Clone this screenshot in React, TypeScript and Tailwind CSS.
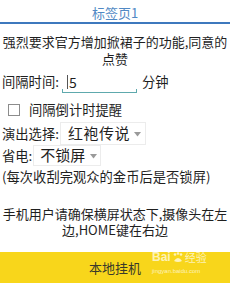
import React from "react";

function Caret() {
  return (
    <svg width="7" height="5" viewBox="0 0 7 5" className="shrink-0">
      <path d="M0 0 L7 0 L3.5 4.5 Z" fill="#9a9a9a" />
    </svg>
  );
}

export default function App() {
  return (
    <div className="relative w-[230px] h-[283px] bg-white flex flex-col overflow-hidden font-['Noto_Sans_CJK_SC',sans-serif] text-[#1f1f1f]">
      <div className="h-[22px] flex items-center justify-center text-[13px] text-[#5189c4] pt-[3px]">
        标签页1
      </div>
      <div className="h-[2px] bg-[#3d78bd]" />

      <div className="px-[2px] pt-[9px] text-[13px] leading-[17px] text-center">
        强烈要求官方增加掀裙子的功能,同意的点赞
      </div>

      <div className="flex items-center h-[24px] mt-[3px] px-[2px] text-[13.3px]">
        <span>间隔时间:</span>
        <div className="relative ml-[3px] w-[75px] h-[24px] flex items-center">
          <span className="w-px h-[14px] bg-[#555] ml-[5px]" />
          <span className="ml-[1px] text-[14px]">5</span>
          <div className="absolute left-0 right-0 bottom-[1px] h-[4px] border-l border-r border-b border-[#5ea9ad]" />
        </div>
        <span className="ml-[5px]">分钟</span>
      </div>

      <div className="flex items-center h-[22px] mt-[5px] pl-[8px] text-[13.3px]">
        <span className="w-[12px] h-[12px] border border-[#8c8c8c] bg-white" />
        <span className="ml-[9px]">间隔倒计时提醒</span>
      </div>

      <div className="flex items-center h-[23px] mt-[1px] px-[2px] text-[13.3px]">
        <span>演出选择:</span>
        <div className="ml-[1px] w-[86px] h-[23px] border border-[#ececec] flex items-center pl-[7px] pr-[4px]">
          <span className="text-[15px] tracking-[0.5px]">红袍传说</span>
          <span className="ml-auto mt-[1px]">
            <Caret />
          </span>
        </div>
      </div>

      <div className="flex items-center h-[21px] px-[2px] text-[13.3px]">
        <span>省电:</span>
        <div className="ml-[1px] w-[68px] h-[21px] border border-[#ececec] flex items-center pl-[6px] pr-[3px]">
          <span className="text-[15px]">不锁屏</span>
          <span className="ml-auto mt-[1px]">
            <Caret />
          </span>
        </div>
      </div>

      <div className="px-[2px] mt-[1px] h-[20px] flex items-center text-[13.3px]">
        (每次收刮完观众的金币后是否锁屏)
      </div>

      <div className="px-[2px] pt-[19px] text-[13px] leading-[16px] text-center">
        手机用户请确保横屏状态下,摄像头在左边,HOME键在右边
      </div>

      <div className="mt-auto h-[31px] bg-[#f8d61b] flex items-center justify-center text-[13px] text-[#3a3a2a]">
        本地挂机
      </div>

      <div className="absolute left-[152px] top-[250px] flex flex-col items-start text-white/70 pointer-events-none">
        <div className="flex items-center text-[12px] leading-[14px] font-bold font-['Liberation_Sans',sans-serif]">
          <span>Bai</span>
          <svg width="12" height="11" viewBox="0 0 12 11" className="mx-[1px]">
            <circle cx="3" cy="2.5" r="1.3" fill="rgba(255,255,255,0.7)" />
            <circle cx="6" cy="1.5" r="1.3" fill="rgba(255,255,255,0.7)" />
            <circle cx="9" cy="2.5" r="1.3" fill="rgba(255,255,255,0.7)" />
            <path d="M2 9 Q6 3 10 9 Q6 11 2 9 Z" fill="rgba(255,255,255,0.7)" />
          </svg>
          <span className="text-[11px] font-normal font-['Noto_Sans_CJK_SC',sans-serif]">经验</span>
        </div>
        <div className="text-[6px] leading-[8px] mt-[3px] font-['Liberation_Sans',sans-serif]">jingyan.baidu.com</div>
      </div>
    </div>
  );
}
